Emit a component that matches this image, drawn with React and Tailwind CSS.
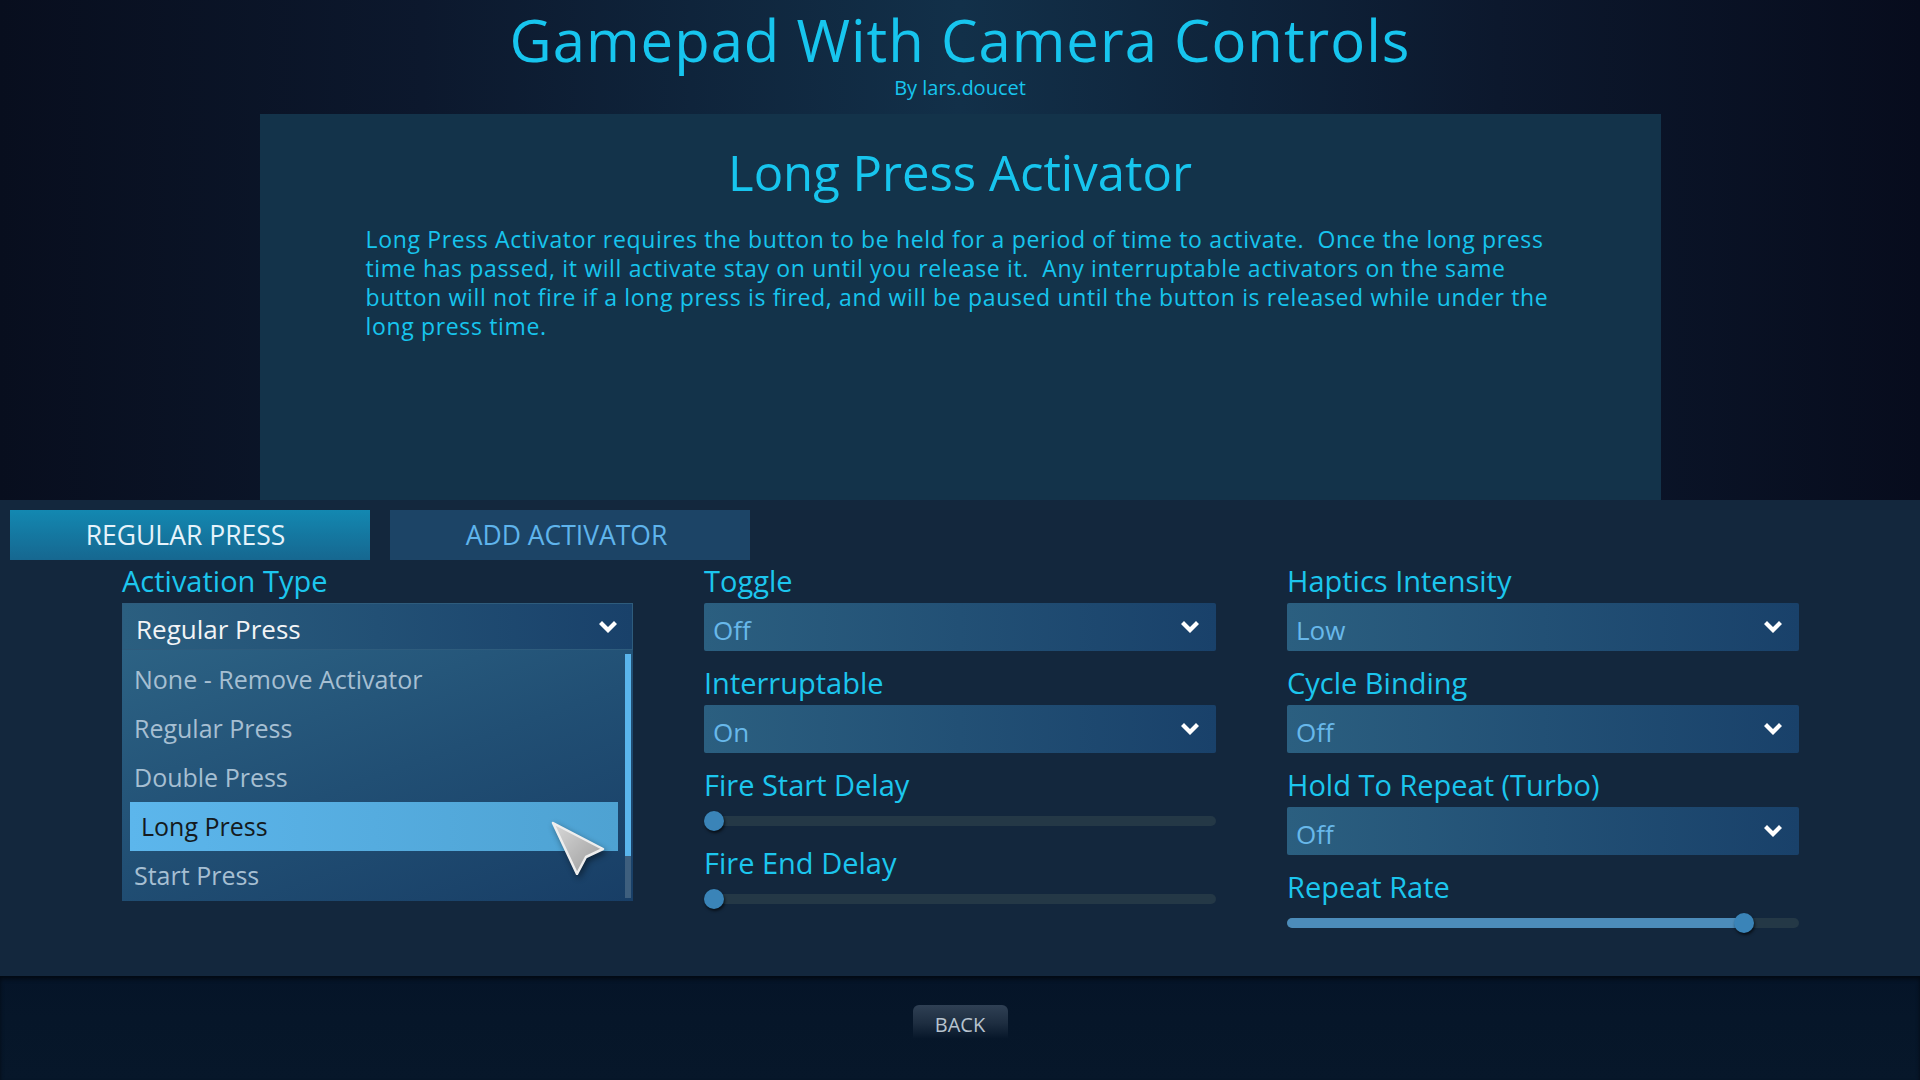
import React from "react";

const Chevron = () => (
  <svg width="18" height="12" viewBox="0 0 18 12" className="shrink-0">
    <path d="M0 3 L3 0 L9 6 L15 0 L18 3 L9 12 Z" fill="#ffffff" />
  </svg>
);

const Label = ({ children }) => (
  <div className="text-[29px] leading-[32px] text-[#1cc6ee] whitespace-nowrap">{children}</div>
);

const Select = ({ value }) => (
  <div className="mt-[6px] h-[48px] rounded-[2px] bg-[linear-gradient(90deg,#2b5f80,#19416a)] flex items-center justify-between pl-[9px] pr-[17px]">
    <span className="mt-[5px] text-[26px] leading-none text-[#68b8ea]">{value}</span>
    <Chevron />
  </div>
);

const Slider = ({ p }) => (
  <div className="h-[40px] flex items-center">
    <div className="relative w-full h-[10px] rounded-full bg-[#243846]">
      {p > 0 && (
        <div
          className="absolute left-0 top-0 h-full rounded-full bg-[#4c8cba]"
          style={{ width: `calc((100% - 20px) * ${p} + 10px)` }}
        />
      )}
      <div
        className="absolute top-1/2 -translate-y-1/2 w-[20px] h-[20px] rounded-full bg-[#3a84b8] shadow-[1px_2px_3px_rgba(0,0,0,0.65)]"
        style={{ left: `calc((100% - 20px) * ${p})` }}
      />
    </div>
  </div>
);

const Pointer = () => (
  <svg
    width="54"
    height="54"
    viewBox="0 0 54 54"
    className="absolute left-[551px] top-[821px] drop-shadow-[2px_3px_3px_rgba(0,0,0,0.45)]"
  >
    <defs>
      <linearGradient id="ptr" x1="0" y1="0" x2="1" y2="1">
        <stop offset="0" stopColor="#d9d9d9" />
        <stop offset="1" stopColor="#9a9a9a" />
      </linearGradient>
    </defs>
    <polygon
      points="2,2 52,28 35,36 26,53"
      fill="url(#ptr)"
      stroke="#eeeeee"
      strokeWidth="2.5"
      strokeLinejoin="round"
    />
  </svg>
);

const options = ["None - Remove Activator", "Regular Press", "Double Press", "Long Press", "Start Press"];

export default function App() {
  return (
    <div className="relative w-[1920px] h-[1080px] overflow-hidden flex flex-col font-['Open_Sans',sans-serif]">
      {/* header and description */}
      <div className="h-[500px] shrink-0 flex flex-col bg-[linear-gradient(90deg,#080e1e_0%,#0c182d_22%,#123049_50%,#0c182d_78%,#070c1d_100%)]">
        <div className="h-[114px] flex flex-col items-center">
          <div className="text-[58px] leading-[79px] tracking-[1px] text-[#17c5ee] whitespace-nowrap">
            Gamepad With Camera Controls
          </div>
          <div className="-mt-[1px] text-[20px] leading-[20px] text-[#17c5ee]">By lars.doucet</div>
        </div>
        <div className="mx-auto w-[1401px] flex-1 bg-[#13334a] flex flex-col">
          <div className="mt-[33px] text-center text-[49px] leading-[50px] text-[#17c5ee]">Long Press Activator</div>
          <div className="mt-[28px] pl-[106px] text-[23px] leading-[29px] tracking-[0.65px] text-[#17c5ee]">
            <div className="whitespace-pre">Long Press Activator requires the button to be held for a period of time to activate.  Once the long press</div>
            <div className="whitespace-pre">time has passed, it will activate stay on until you release it.  Any interruptable activators on the same</div>
            <div className="whitespace-pre">button will not fire if a long press is fired, and will be paused until the button is released while under the</div>
            <div className="whitespace-pre">long press time.</div>
          </div>
        </div>
      </div>

      {/* activator settings */}
      <div className="h-[476px] shrink-0 bg-[#13273d]">
        <div className="pt-[10px] pl-[10px] flex gap-[20px]">
          <div className="w-[360px] h-[50px] flex items-center justify-center pr-[9px] pt-[2px] bg-[linear-gradient(180deg,#1388b1,#166790)] text-[26.5px] text-[#e6f3fb]">
            REGULAR PRESS
          </div>
          <div className="w-[360px] h-[50px] flex items-center justify-center pr-[7px] pt-[2px] bg-[#1c4466] text-[26.5px] text-[#5fb4ec]">
            ADD ACTIVATOR
          </div>
        </div>

        <div className="mt-[5px] ml-[122px] grid grid-cols-[511px_512px_512px] gap-x-[71px] items-start">
          {/* activation type with open list */}
          <div className="flex flex-col">
            <Label>Activation Type</Label>
            <div className="mt-[6px] h-[47px] border border-[#2e5c7d] bg-[linear-gradient(90deg,#2b5f80,#19416a)] flex items-center justify-between pl-[13px] pr-[15px]">
              <span className="mt-[5px] text-[26px] leading-none text-[#f2f4f6]">Regular Press</span>
              <Chevron />
            </div>
            <div className="relative h-[251px] pt-[5px] bg-[linear-gradient(160deg,#2c6284_0%,#214f74_50%,#183e66_100%)]">
              {options.map((o) =>
                o === "Long Press" ? (
                  <div
                    key={o}
                    className="ml-[8px] w-[488px] h-[49px] flex items-center pl-[11px] bg-[linear-gradient(90deg,#5cb6ec,#4ea2d2)] text-[25px] text-[#141a20]"
                  >
                    {o}
                  </div>
                ) : (
                  <div key={o} className="ml-[8px] w-[488px] h-[49px] flex items-center pl-[4px] text-[25px] text-[#a6bfd2]">
                    {o}
                  </div>
                )
              )}
              <div className="absolute right-[2px] top-[4px] w-[6px] h-[244px] bg-[#3e5f7e]">
                <div className="h-[202px] bg-[#5ab5ec]" />
              </div>
            </div>
          </div>

          {/* toggles and delays */}
          <div className="flex flex-col">
            <Label>Toggle</Label>
            <Select value="Off" />
            <div className="mt-[16px]">
              <Label>Interruptable</Label>
              <Select value="On" />
            </div>
            <div className="mt-[16px]">
              <Label>Fire Start Delay</Label>
              <Slider p={0} />
            </div>
            <div className="mt-[6px]">
              <Label>Fire End Delay</Label>
              <Slider p={0} />
            </div>
          </div>

          {/* haptics and repeat */}
          <div className="flex flex-col">
            <Label>Haptics Intensity</Label>
            <Select value="Low" />
            <div className="mt-[16px]">
              <Label>Cycle Binding</Label>
              <Select value="Off" />
            </div>
            <div className="mt-[16px]">
              <Label>Hold To Repeat (Turbo)</Label>
              <Select value="Off" />
            </div>
            <div className="mt-[16px]">
              <Label>Repeat Rate</Label>
              <Slider p={0.909} />
            </div>
          </div>
        </div>
      </div>

      {/* footer */}
      <div className="flex-1 relative bg-[linear-gradient(180deg,#051428,#061629_40%,#07172a)] shadow-[inset_0_3px_4px_rgba(0,0,0,0.55)] flex justify-center">
        <div className="mt-[29px] w-[95px] h-[34px] rounded-t-[6px] bg-[linear-gradient(180deg,#2f4054_0%,#1d2d40_55%,#061629_100%)] flex justify-center">
          <span className="mt-[10px] text-[20px] leading-[20px] text-[#b7c3cf]">BACK</span>
        </div>
      </div>

      <Pointer />
    </div>
  );
}
